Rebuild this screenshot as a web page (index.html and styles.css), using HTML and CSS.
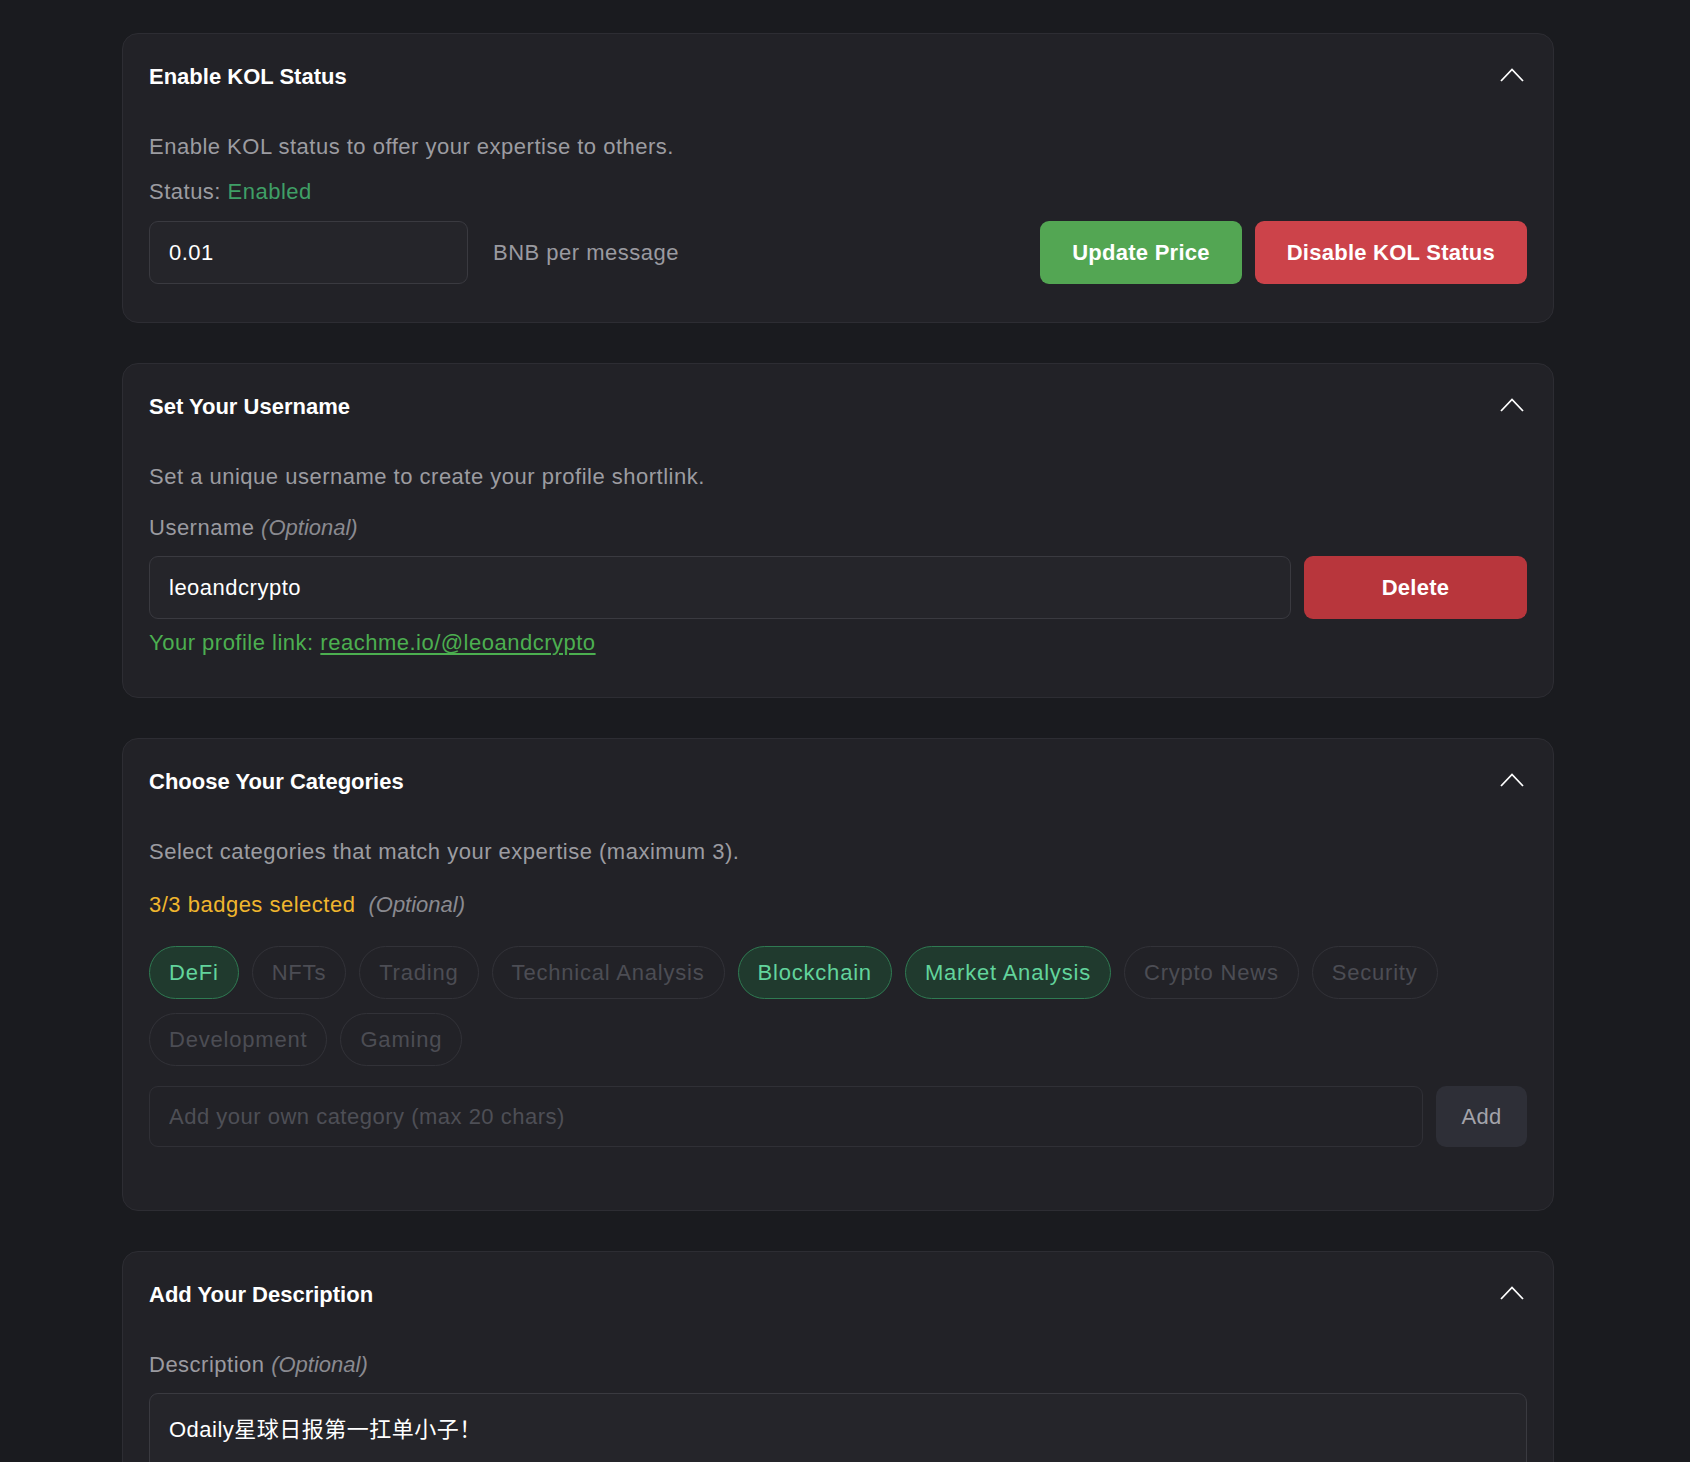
FILE: index.html
```html
<!DOCTYPE html>
<html lang="en">
<head>
<meta charset="utf-8">
<title>KOL Settings</title>
<link rel="stylesheet" href="styles.css">
</head>
<body>
<div class="page">
  <div class="stack">
    <section class="card">
      <header class="card-head">
        <h2 class="card-title">Enable KOL Status</h2>
        <svg class="chevron" width="24" height="14" viewBox="0 0 24 14"><polyline points="1,13 12,1.5 23,13" fill="none" stroke="#ffffff" stroke-width="1.8"/></svg>
      </header>
      <div class="card-body">
        <p class="desc">Enable KOL status to offer your expertise to others.</p>
        <p class="status">Status: <span class="enabled">Enabled</span></p>
        <div class="price-row">
          <input class="field price-input" type="text" value="0.01">
          <span class="unit">BNB per message</span>
          <div class="spacer"></div>
          <button class="btn btn-green">Update Price</button>
          <button class="btn btn-red">Disable KOL Status</button>
        </div>
      </div>
    </section>

    <section class="card">
      <header class="card-head">
        <h2 class="card-title">Set Your Username</h2>
        <svg class="chevron" width="24" height="14" viewBox="0 0 24 14"><polyline points="1,13 12,1.5 23,13" fill="none" stroke="#ffffff" stroke-width="1.8"/></svg>
      </header>
      <div class="card-body">
        <p class="desc">Set a unique username to create your profile shortlink.</p>
        <p class="label label-user">Username <em class="opt">(Optional)</em></p>
        <div class="user-row">
          <input class="field user-input" type="text" value="leoandcrypto">
          <button class="btn btn-delete">Delete</button>
        </div>
        <p class="profile-link">Your profile link: <a href="#">reachme.io/@leoandcrypto</a></p>
      </div>
    </section>

    <section class="card">
      <header class="card-head">
        <h2 class="card-title">Choose Your Categories</h2>
        <svg class="chevron" width="24" height="14" viewBox="0 0 24 14"><polyline points="1,13 12,1.5 23,13" fill="none" stroke="#ffffff" stroke-width="1.8"/></svg>
      </header>
      <div class="card-body">
        <p class="desc">Select categories that match your expertise (maximum 3).</p>
        <p class="badges-count"><span class="count">3/3 badges selected</span><em class="opt">(Optional)</em></p>
        <div class="chips">
          <span class="chip chip-on">DeFi</span>
          <span class="chip">NFTs</span>
          <span class="chip">Trading</span>
          <span class="chip">Technical Analysis</span>
          <span class="chip chip-on">Blockchain</span>
          <span class="chip chip-on">Market Analysis</span>
          <span class="chip">Crypto News</span>
          <span class="chip">Security</span>
          <span class="chip">Development</span>
          <span class="chip">Gaming</span>
        </div>
        <div class="cat-row">
          <input class="field cat-input" type="text" placeholder="Add your own category (max 20 chars)">
          <button class="btn btn-add">Add</button>
        </div>
      </div>
    </section>

    <section class="card">
      <header class="card-head">
        <h2 class="card-title">Add Your Description</h2>
        <svg class="chevron" width="24" height="14" viewBox="0 0 24 14"><polyline points="1,13 12,1.5 23,13" fill="none" stroke="#ffffff" stroke-width="1.8"/></svg>
      </header>
      <div class="card-body card-body-desc">
        <p class="label">Description <em class="opt">(Optional)</em></p>
        <textarea class="field desc-area">Odaily星球日报第一扛单小子！</textarea>
      </div>
    </section>
  </div>
</div>
</body>
</html>
```

FILE: styles.css
```css
* { box-sizing: border-box; }

html, body {
  margin: 0;
  padding: 0;
  background: #1a1b1f;
}

body {
  font-family: "Liberation Sans", "Noto Sans CJK SC", Arial, sans-serif;
  font-size: 22px;
  line-height: 33px;
  color: #9b9ba0;
  letter-spacing: 0.5px;
}

.page {
  padding: 33px 0 40px 122px;
}

.stack {
  width: 1432px;
  display: flex;
  flex-direction: column;
  gap: 40px;
}

.card {
  background: #222227;
  border: 1px solid #2d2d33;
  border-radius: 16px;
  padding: 0 26px 38px;
}

.card-head {
  height: 84px;
  display: flex;
  align-items: center;
  justify-content: space-between;
}

.card-title {
  margin: 0;
  font-size: 22px;
  font-weight: 700;
  color: #ffffff;
  line-height: 33px;
  letter-spacing: 0;
}

.chevron {
  display: block;
  margin-right: 3px;
  margin-top: -2px;
}

.card-body {
  padding-top: 12px;
}

p { margin: 0; }

.desc { color: #9c9ca1; }

.status { margin-top: 12px; color: #9c9ca1; }
.enabled { color: #3f9f66; }

.price-row {
  margin-top: 13px;
  display: flex;
  align-items: center;
}

.field {
  font-family: inherit;
  font-size: 22px;
  letter-spacing: 0.5px;
  color: #ffffff;
  background: #25252a;
  border: 1.5px solid #3a3a40;
  border-radius: 9px;
  padding: 0 19px;
  outline: none;
}

.price-input {
  width: 319px;
  height: 63px;
}

.unit {
  margin-left: 25px;
  color: #9a9aa0;
}

.spacer { flex: 1; }

.btn {
  font-family: inherit;
  font-size: 22px;
  font-weight: 700;
  letter-spacing: 0.25px;
  color: #ffffff;
  border: none;
  border-radius: 9px;
  height: 63px;
  padding: 0 32px;
  cursor: pointer;
}

.btn-green { background: #53a653; }
.btn-red { background: #cc434a; margin-left: 13px; }

.label-user { margin-top: 18px; }
.label { color: #9a9aa0; }

.opt {
  font-style: italic;
  color: #8a8a90;
  letter-spacing: 0;
}

.user-row {
  margin-top: 12px;
  display: flex;
  gap: 13px;
}

.user-input {
  flex: 1;
  height: 63px;
}

.btn-delete {
  width: 223px;
  padding: 0;
  background: #b8363c;
}

.profile-link {
  margin-top: 7px;
  color: #4caf50;
}

.profile-link a {
  color: #4caf50;
  text-decoration: underline;
  text-underline-offset: 3px;
}

.badges-count {
  margin-top: 20px;
}

.count {
  color: #f0b62e;
  margin-right: 13px;
}

.chips {
  margin-top: 25px;
  display: flex;
  flex-wrap: wrap;
  column-gap: 13px;
  row-gap: 14px;
}

.chip {
  height: 53px;
  display: inline-flex;
  align-items: center;
  padding: 0 19px;
  border: 1.5px solid #323238;
  border-radius: 27px;
  color: #4c4d54;
  background: transparent;
  letter-spacing: 0.8px;
}

.chip-on {
  background: #203a2e;
  border-color: #2f7a52;
  color: #62d49c;
}

.cat-row {
  margin-top: 20px;
  margin-bottom: 25px;
  display: flex;
  gap: 13px;
}

.cat-input {
  flex: 1;
  height: 61px;
  background: #222227;
  border-color: #303036;
}

.cat-input::placeholder { color: #4e4f56; }

.btn-add {
  width: 91px;
  height: 61px;
  padding: 0;
  background: #2e2f37;
  color: #a3a3aa;
  font-weight: 400;
  border-radius: 10px;
}

.card-body-desc .label { margin-top: 0; }

.desc-area {
  display: block;
  margin-top: 12px;
  width: 100%;
  height: 170px;
  padding: 19px 19px;
  line-height: 33px;
  resize: none;
}
```
